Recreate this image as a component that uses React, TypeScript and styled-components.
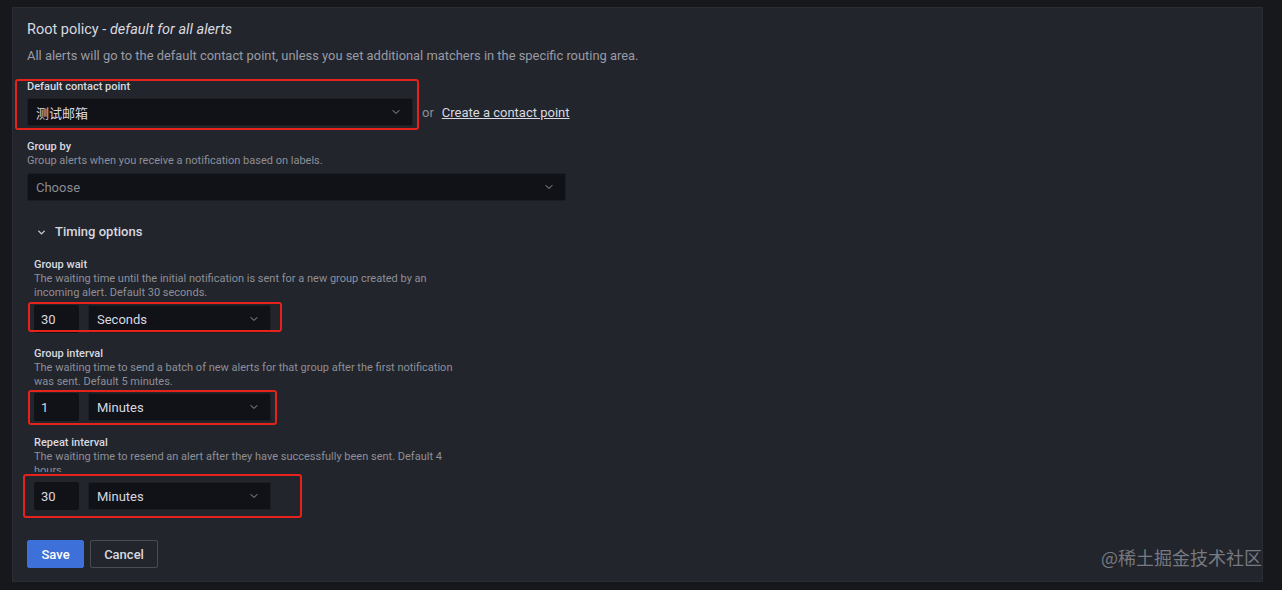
import styled, { createGlobalStyle } from "styled-components";
import { ChevronDown } from "lucide-react";

const GlobalStyle = createGlobalStyle`
  html, body {
    margin: 0;
    padding: 0;
    background: #17181c;
    font-family: Roboto, "Noto Sans", "Noto Sans CJK SC", sans-serif;
    color: #ccccdc;
  }
  * { box-sizing: border-box; }
`;

const Page = styled.div`
  display: flex;
  height: 590px;
  padding: 7px 19px 8px 12px;
`;

const Panel = styled.div`
  position: relative;
  flex: 1;
  background: #22252b;
  border: 1px solid #2a2d33;
  padding: 12px 15px 0 14px;
`;

const Title = styled.h2`
  margin: 0;
  font-size: 14.5px;
  font-weight: 400;
  line-height: 20px;
  color: #d8d9e0;
  em { font-style: italic; }
`;

const Lead = styled.p`
  margin: 7px 0 0;
  font-size: 12.9px;
  line-height: 18px;
  color: #9a9ba6;
`;

const Field = styled.div<{ $top: number }>`
  margin-top: ${(p) => p.$top}px;
`;

const InlineField = styled.div<{ $top: number }>`
  display: flex;
  align-items: flex-end;
  margin-top: ${(p) => p.$top}px;
`;

const Label = styled.div`
  font-size: 11px;
  font-weight: 500;
  line-height: 14px;
  color: #d8d9e0;
`;

const Hint = styled.div<{ $clip?: number }>`
  font-size: 11px;
  line-height: 14px;
  color: #8e8f99;
  max-width: 430px;
  ${(p) => (p.$clip ? `height: ${p.$clip}px; overflow: hidden;` : "")}
`;

const Row = styled.div<{ $top: number }>`
  display: flex;
  align-items: center;
  gap: 9px;
  margin-top: ${(p) => p.$top}px;
`;

const Marked = styled.div<{ $box: [number, number, number, number] }>`
  position: relative;
  display: inline-flex;
  &::after {
    content: "";
    position: absolute;
    top: ${(p) => p.$box[0]}px;
    right: ${(p) => p.$box[1]}px;
    bottom: ${(p) => p.$box[2]}px;
    left: ${(p) => p.$box[3]}px;
    border: 2px solid #e5231b;
    border-radius: 3px;
    pointer-events: none;
  }
`;

const Select = styled.div<{ $w: number; $muted?: boolean }>`
  display: flex;
  align-items: center;
  justify-content: space-between;
  width: ${(p) => p.$w}px;
  height: 28px;
  padding: 0 10px 0 8px;
  background: #111217;
  border: 1px solid #1c1e23;
  border-radius: 2px;
  font-size: 13px;
  color: ${(p) => (p.$muted ? "#8a8b95" : "#d8d9e0")};
  svg { color: #9a9ba6; }
`;

const NumberBox = styled.div`
  display: flex;
  align-items: center;
  width: 45px;
  height: 28px;
  padding: 0 7px;
  background: #111217;
  border-radius: 2px;
  font-size: 13px;
  color: #d8d9e0;
`;

const Aside = styled.div`
  display: flex;
  align-items: center;
  height: 28px;
`;

const Or = styled.span`
  font-size: 13px;
  color: #8e8f99;
  margin-left: 9px;
`;

const Link = styled.a`
  font-size: 13px;
  color: #d8d9e0;
  text-decoration: underline;
  margin-left: 8px;
`;

const Toggle = styled.div`
  display: flex;
  align-items: center;
  gap: 8px;
  margin: 22px 0 0 9px;
  line-height: 18px;
  font-size: 13px;
  font-weight: 500;
  color: #d8d9e0;
  svg { color: #ccccdc; }
`;

const Timing = styled.div`
  padding-left: 7px;
`;

const Buttons = styled.div`
  display: flex;
  gap: 6px;
  margin-top: 30px;
`;

const Button = styled.button<{ $primary?: boolean }>`
  height: 28px;
  padding: 0 ${(p) => (p.$primary ? 13.5 : 13)}px;
  font-family: inherit;
  font-size: 13px;
  font-weight: 500;
  border-radius: 2px;
  color: ${(p) => (p.$primary ? "#ffffff" : "#d8d9e0")};
  background: ${(p) => (p.$primary ? "#3d71d9" : "transparent")};
  border: 1px solid ${(p) => (p.$primary ? "#3d71d9" : "#4a4c55")};
`;

const Watermark = styled.div`
  position: absolute;
  right: 0;
  bottom: 11px;
  font-size: 18px;
  color: #777981;
  font-family: "Noto Sans CJK SC", sans-serif;
`;

type Box = [number, number, number, number];

const timings: {
  label: string;
  hint: string;
  value: string;
  unit: string;
  box: Box;
  top: number;
  gap: number;
  clip?: number;
}[] = [
  {
    label: "Group wait",
    hint: "The waiting time until the initial notification is sent for a new group created by an incoming alert. Default 30 seconds.",
    value: "30",
    unit: "Seconds",
    box: [-3, -11, 1, -6],
    top: 17,
    gap: 5,
  },
  {
    label: "Group interval",
    hint: "The waiting time to send a batch of new alerts for that group after the first notification was sent. Default 5 minutes.",
    value: "1",
    unit: "Minutes",
    box: [-3, -6, -4, -6],
    top: 14,
    gap: 4,
  },
  {
    label: "Repeat interval",
    hint: "The waiting time to resend an alert after they have successfully been sent. Default 4 hours.",
    value: "30",
    unit: "Minutes",
    box: [-8, -31, -8, -11],
    top: 15,
    gap: 10,
    clip: 22,
  },
];

function App() {
  return (
    <>
      <GlobalStyle />
      <Page>
        <Panel>
          <Title>
            Root policy - <em>default for all alerts</em>
          </Title>
          <Lead>
            All alerts will go to the default contact point, unless you set additional matchers in the specific routing area.
          </Lead>

          <InlineField $top={15}>
            <Marked $box={[-1, -6, -4, -12]}>
              <div>
                <Label>Default contact point</Label>
                <Row $top={4}>
                  <Select $w={386}>
                    测试邮箱
                    <ChevronDown size={12} />
                  </Select>
                </Row>
              </div>
            </Marked>
            <Aside>
              <Or>or</Or>
              <Link>Create a contact point</Link>
            </Aside>
          </InlineField>

          <Field $top={14}>
            <Label>Group by</Label>
            <Hint>Group alerts when you receive a notification based on labels.</Hint>
            <Row $top={5}>
              <Select $w={539} $muted>
                Choose
                <ChevronDown size={12} />
              </Select>
            </Row>
          </Field>

          <Toggle>
            <ChevronDown size={11} strokeWidth={3} />
            Timing options
          </Toggle>

          <Timing>
            {timings.map((t) => (
              <Field key={t.label} $top={t.top}>
                <Label>{t.label}</Label>
                <Hint $clip={t.clip}>{t.hint}</Hint>
                <Row $top={t.gap}>
                  <Marked $box={t.box}>
                    <Row $top={0}>
                      <NumberBox>{t.value}</NumberBox>
                      <Select $w={183}>
                        {t.unit}
                        <ChevronDown size={12} />
                      </Select>
                    </Row>
                  </Marked>
                </Row>
              </Field>
            ))}
          </Timing>

          <Buttons>
            <Button $primary>Save</Button>
            <Button>Cancel</Button>
          </Buttons>

          <Watermark>@稀土掘金技术社区</Watermark>
        </Panel>
      </Page>
    </>
  );
}

export default App;
